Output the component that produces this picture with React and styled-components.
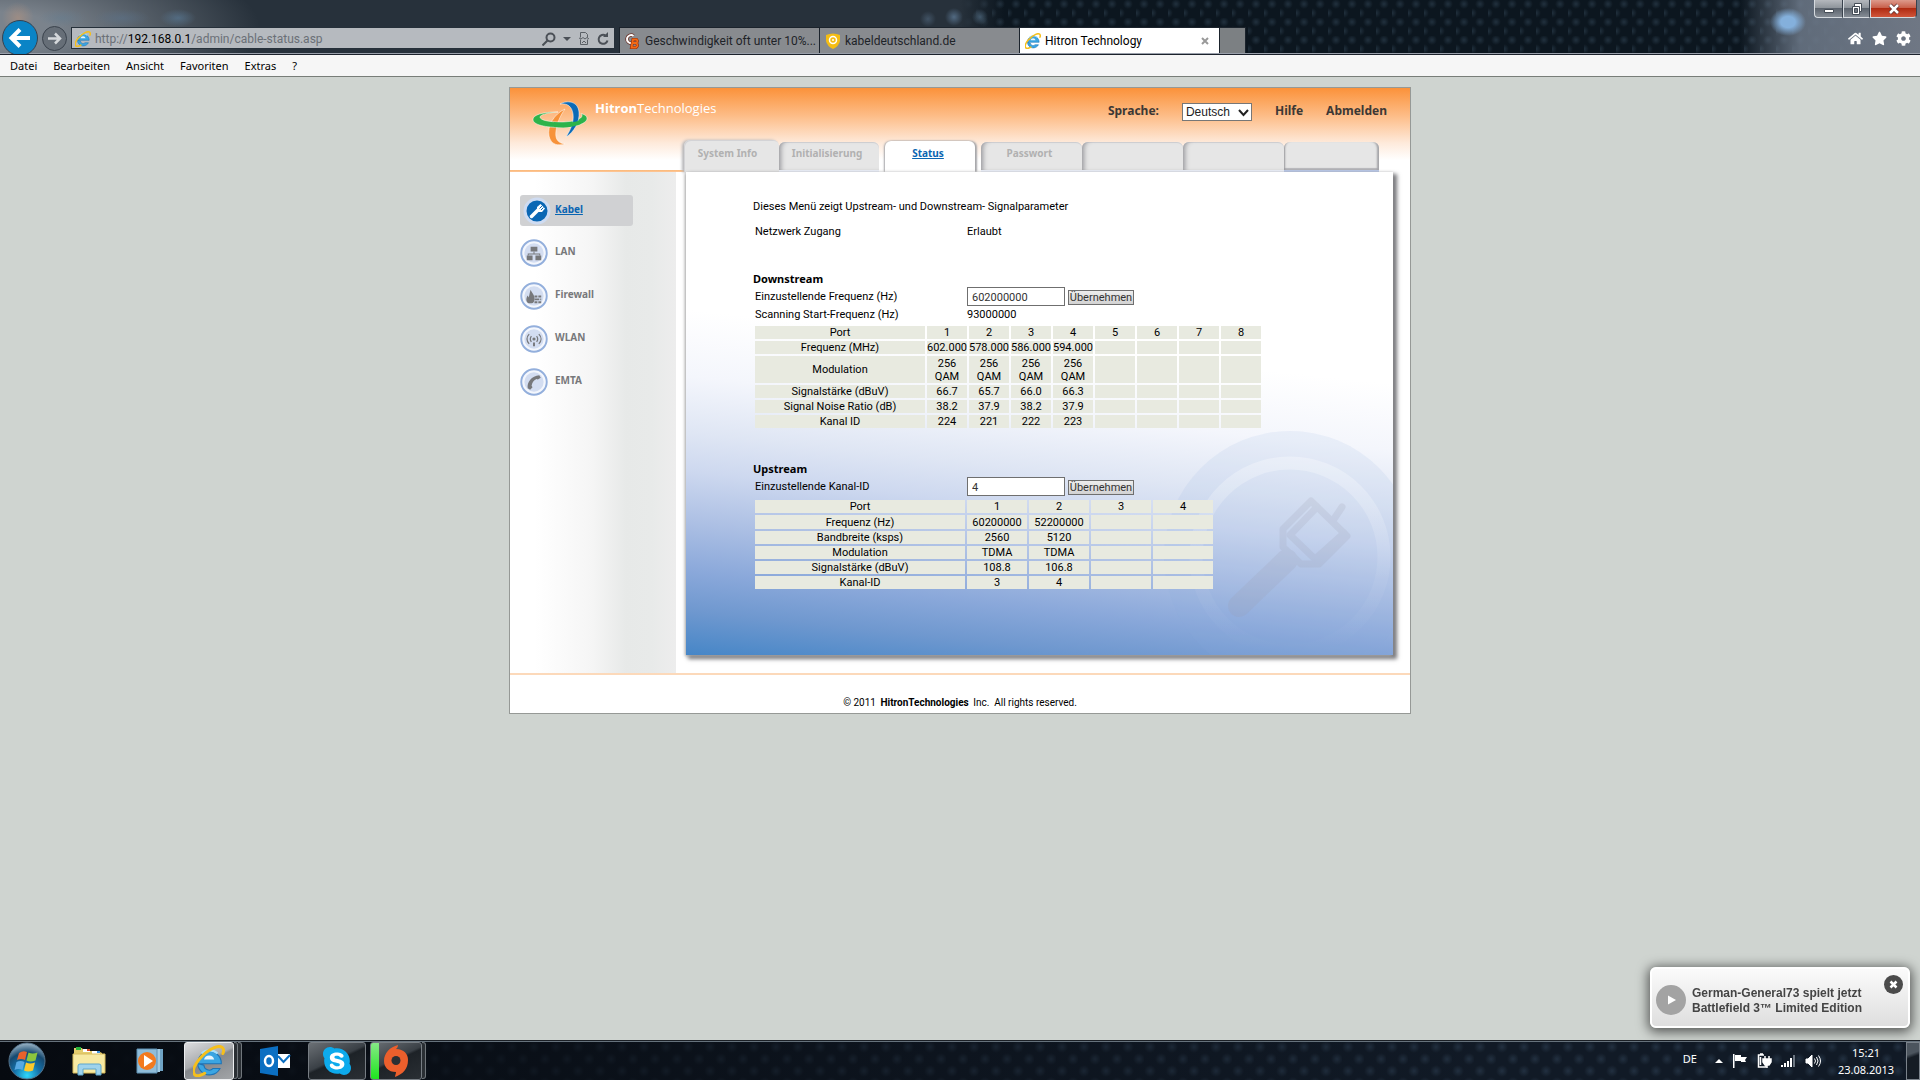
import styled, { createGlobalStyle, css } from 'styled-components';
import { useState } from 'react';
import { FaHome, FaStar, FaCog, FaSkype } from 'react-icons/fa';

const GlobalStyle = createGlobalStyle`
  * {
    box-sizing: border-box;
  }

  body {
    margin: 0;
    background-color: #cfd4d0;
    color: #000;
    font-family: 'Noto Sans', sans-serif;
    font-size: 11px;
  }

  button, input, select {
    font-family: inherit;
    color: inherit;
    margin: 0;
  }

  svg {
    display: block;
    flex: none;
  }
`

const Desktop = styled.div`
  min-height: 100vh;
  display: flex;
  flex-direction: column;
  overflow: hidden;
`

/* browser chrome */

const TitleBar = styled.header`
  overflow: hidden;
  border-bottom: 1px solid #1c222c;
  box-shadow: inset 0 -1px 0 #9aa0ab;
  font-family: Roboto, sans-serif;
  background:
    radial-gradient(ellipse 18px 14px at 1788px 22px, #84b0dc 40%, transparent 100%),
    linear-gradient(90deg, transparent 1740px, rgba(110, 122, 138, 0.85) 1800px, #6f7784 100%),
    radial-gradient(circle 16px at 18px 18px, rgba(190, 150, 125, 0.5), transparent),
    radial-gradient(ellipse 24px 9px at 62px 18px, rgba(100, 125, 145, 0.5), transparent),
    radial-gradient(ellipse 28px 9px at 122px 18px, rgba(90, 115, 140, 0.5), transparent),
    radial-gradient(ellipse 18px 9px at 178px 18px, rgba(90, 125, 155, 0.6), transparent),
    radial-gradient(circle 8px at 928px 19px, rgba(90, 115, 140, 0.5), transparent),
    radial-gradient(circle 9px at 954px 17px, rgba(100, 130, 160, 0.7), transparent),
    radial-gradient(circle 8px at 980px 17px, rgba(90, 120, 145, 0.6), transparent),
    radial-gradient(ellipse 260px 90px at 0 30px, #7b838c 20%, transparent 100%),
    linear-gradient(90deg, #27313b, #27313b 960px, rgba(39, 49, 59, 0) 1004px),
    radial-gradient(circle 5px at 8px 4px, rgba(75, 100, 120, 0.35), transparent) 0 0 / 16px 18px,
    radial-gradient(circle 5px at 0 13px, rgba(75, 100, 120, 0.35), transparent) 0 0 / 16px 18px,
    #0c161f;
`

const WindowControls = styled.div`
  height: 23px;
  padding-right: 3px;
  display: flex;
  justify-content: flex-end;
`

const WindowButton = styled.button`
  width: ${({ $width }) => $width}px;
  height: 18px;
  padding: 0;
  display: flex;
  align-items: center;
  justify-content: center;
  border: 1px solid #d5dadf;
  border-top: none;
  border-right-color: #39424d;
  border-radius: ${({ $radius }) => $radius || '0'};
  background: ${({ $close }) => $close
    ? 'linear-gradient(#dd9a8c 0, #c9614c 45%, #b02b12 50%, #d0553a 100%)'
    : 'linear-gradient(#b4b8bd 0, #8f959c 45%, #5b636d 50%, #858c95 100%)'};
`

const ChromeRow = styled.div`
  height: 31px;
  padding: 0 9px 1px 2px;
  display: flex;
  align-items: center;
`

const RoundButton = styled.button`
  border: none;
  background: none;
  padding: 0;
  margin-right: 4px;
`

const AddressBar = styled.div`
  flex: 0 1 544px;
  height: 22px;
  padding: 1px 4px 0 3px;
  display: flex;
  align-items: center;
  gap: 4px;
  border: 1px solid #dfe2e5;
  outline: 1px solid #26303a;
  outline-offset: -1px;
  background-color: #b6babf;
  color: #6b7077;
`

const Address = styled.div`
  flex: 1;
  font-size: 12px;
  line-height: 20px;
  white-space: nowrap;
  overflow: hidden;

  b {
    font-weight: 400;
    color: #000;
  }
`

const AddressTools = styled.div`
  display: flex;
  align-items: center;
  gap: 7px;
`

const BrowserTabs = styled.nav`
  align-self: flex-end;
  margin-left: 4px;
  display: flex;
`

const BrowserTab = styled.a`
  width: 200px;
  height: 26px;
  padding: 0 10px 0 5px;
  display: flex;
  align-items: center;
  gap: 4px;
  border-left: 1px solid #1b232c;
  border-top: 1px solid #1b232c;
  background-color: ${({ $active }) => $active ? '#fff' : '#888b8f'};
  color: ${({ $active }) => $active ? '#000' : '#1e2328'};
  font-size: 12px;
  line-height: 16px;
  text-decoration: none;
  white-space: nowrap;

  span {
    flex: 1;
  }
`

const NewTab = styled.button`
  width: 27px;
  height: 26px;
  border: 1px solid #1b232c;
  border-bottom: none;
  background-color: #7c8083;
`

const BrowserTools = styled.div`
  margin-left: auto;
  display: flex;
  align-items: center;
  gap: 9px;
  color: #fff;
`

const MenuBar = styled.nav`
  height: 22px;
  padding-left: 10px;
  display: flex;
  align-items: center;
  gap: 16px;
  background-color: #f6f6f6;
  border-bottom: 1px solid #787d78;

  a {
    color: #000;
    font-size: 11px;
    line-height: 20px;
    text-decoration: none;
  }
`

/* router page */

const Viewport = styled.main`
  flex: 1;
  padding-top: 10px;
`

const Page = styled.div`
  max-width: 902px;
  margin: 0 auto;
  border: 1px solid #969996;
  background-color: #fff;
`

const PageHeader = styled.div`
  height: 84px;
  padding-left: 20px;
  display: flex;
  background:
    linear-gradient(#fbb877, #fdc799) left bottom / 174px 2px no-repeat,
    linear-gradient(#fb923a 0, #fdbd88 28px, #feeadb 55px, #fff 72px);
`

const HeaderMain = styled.div`
  flex: 1;
  display: flex;
  flex-direction: column;
  justify-content: space-between;
`

const HeaderTop = styled.div`
  height: 48px;
  padding-right: 23px;
  display: flex;
  align-items: center;
`

const Wordmark = styled.div`
  align-self: flex-start;
  padding: 10px 0 0 1px;
  color: #fff;
  font-family: 'Open Sans', sans-serif;
  font-size: 13px;
  line-height: 20px;
`

const HeaderNav = styled.div`
  margin-left: auto;
  display: flex;
  align-items: center;
  gap: 23px;
  color: #3c3835;
  font-size: 12px;
  font-weight: 700;
  line-height: 18px;

  label, a {
    padding-bottom: 3px;
    color: inherit;
    text-decoration: none;
  }
`

const LanguageSelect = styled.span`
  position: relative;

  select {
    width: 70px;
    height: 18px;
    padding: 0 3px;
    display: block;
    appearance: none;
    border: 1px solid #777;
    border-radius: 0;
    background-color: #fff;
    color: #222;
    font-family: 'Liberation Sans', sans-serif;
    font-size: 12px;
    line-height: 16px;
  }

  svg {
    position: absolute;
    right: 3px;
    top: 6px;
    pointer-events: none;
  }
`

const PageTabs = styled.nav`
  height: 32px;
  margin-left: 90px;
  display: flex;
  align-items: flex-end;
`

const PageTab = styled.a`
  width: ${({ $width }) => $width}px;
  height: 28px;
  margin-bottom: 2px;
  padding-right: 4px;
  border-radius: 6px 6px 0 0;
  background-color: #e6e6e6;
  box-shadow: inset 5px 0 5px -3px #98989c, inset 0 1px 0 #d3d3d6, 0 2px 0 #edf1fb;
  color: #b1b1b1;
  font-size: 10px;
  font-weight: 700;
  line-height: 22px;
  text-align: center;
  text-decoration: none;

  ${({ $first }) => $first && css`
    height: 32px;
    margin-bottom: 0;
    padding-top: 2px;
    padding-right: 8px;
    box-shadow: -2px 0 3px #b5b5b8, inset 1px 1px 0 #d3d3d6;
  `}

  ${({ $active }) => $active && css`
    height: 31px;
    margin: 0 6px 0 6px;
    padding-right: 4px;
    padding-top: 1px;
    background-color: #fff;
    box-shadow: -1px 0 2px #a5a5a8, 2px 0 2px #a5a5a8;
    color: #0a65b2;
    text-decoration: underline;
  `}

  ${({ $last }) => $last && css`
    box-shadow: inset 3px 0 2px -2px #98989c, inset -3px 0 2px -1px #a5a5a8, inset 0 -2px 1px #b4b4b8, 0 2px 0 #b9c8ea;
  `}
`

const PageBody = styled.div`
  min-height: 501px;
  display: flex;
`

const SideNav = styled.nav`
  width: 166px;
  padding: 23px 0 0 10px;
  display: flex;
  flex-direction: column;
  background: linear-gradient(90deg, #fff 15%, #f5f5f5 50%, #e7e9e8 70%, #e8eae9 85%, #ededed);
`

const SideLink = styled.a`
  width: 113px;
  height: 31px;
  margin-bottom: ${({ $active }) => $active ? 11 : 12}px;
  display: flex;
  align-items: center;
  gap: ${({ $active }) => $active ? 4 : 7}px;
  padding-left: ${({ $active }) => $active ? 3 : 0}px;
  border-radius: 3px;
  background-color: ${({ $active }) => $active ? '#d0d1d3' : 'transparent'};
  color: ${({ $active }) => $active ? '#0a65b2' : '#77787b'};
  font-size: 10px;
  font-weight: 700;
  line-height: 14px;
  text-decoration: ${({ $active }) => $active ? 'underline' : 'none'};

  span {
    padding-bottom: 4px;
  }
`

const Panel = styled.section`
  flex: 1;
  position: relative;
  margin: 0 17px 18px 10px;
  padding: 28px 0 64px 67px;
  background: linear-gradient(186deg, #fff 38%, #f4f6fc 50%, #dfe6f4 60%, #cdd8ef 67%, #adc0e4 76%, #8aa8da 85%, #6f98cf 92%, #4686c7 100%);
  box-shadow: -1px 1px 3px #aaa, 3px 3px 4px 1px #77777b;
  clip-path: inset(-3px -17px -18px -10px);
`

const Watermark = styled.svg`
  position: absolute;
  right: 0;
  bottom: 0;
`

const Content = styled.div`
  position: relative;
  font-family: Roboto, sans-serif;
  line-height: 14px;
`

const Intro = styled.p`
  margin: 0 0 11px;
`

const SectionTitle = styled.h2`
  margin: ${({ $top }) => $top}px 0 1px;
  font-family: 'Noto Sans', sans-serif;
  font-size: 11px;
  font-weight: 700;
  line-height: 14px;
`

const Field = styled.div`
  margin: 0 2px 2px;
  display: grid;
  grid-template-columns: 212px auto;
  justify-content: start;
  align-items: center;
`

const FieldForm = styled.form`
  display: flex;
  align-items: center;
  gap: 3px;
`

const TextBox = styled.input`
  width: 98px;
  height: 19px;
  padding: 1px 4px 0;
  border: 1px solid #6f6f6f;
  background-color: #fff;
  color: #333;
  font-size: 11px;
`

const ApplyButton = styled.button`
  width: 66px;
  height: 15px;
  margin-top: 1px;
  padding: 0;
  border: 1px solid #6f6f6f;
  background: linear-gradient(#ededed, #d2d2d2);
  color: #333;
  font-size: 11px;
  line-height: 13px;
  text-align: center;
  white-space: nowrap;
`

const SignalTable = styled.table`
  width: ${({ $width }) => $width}px;
  table-layout: fixed;
  border-collapse: separate;
  border-spacing: 2px;

  th, td {
    width: ${({ $cell }) => $cell}px;
    height: 13px;
    padding: 0;
    background-color: #e8eae0;
    font-weight: 400;
    line-height: 13px;
    text-align: center;
  }

  th:first-child {
    width: ${({ $label }) => $label}px;
  }

  tbody tr:nth-child(${({ $tall }) => $tall.row}) > * {
    height: ${({ $tall }) => $tall.height}px;
  }
`

const PageFooter = styled.footer`
  height: 40px;
  padding-top: 21px;
  border-top: 2px solid #fcd9ba;
  font-family: Roboto, sans-serif;
  font-size: 10px;
  line-height: 14px;
  text-align: center;

  b {
    margin: 0 2px;
    font-weight: 700;
  }
`

/* desktop overlays */

const Toast = styled.aside`
  position: fixed;
  right: 10px;
  bottom: 52px;
  width: 260px;
  height: 61px;
  padding: 6px 5px 0 4px;
  display: flex;
  border: 2px solid #fff;
  border-radius: 6px;
  background: linear-gradient(#fbfbfb, #dedede);
  box-shadow: 0 2px 12px 2px rgba(0, 0, 0, 0.6);
  color: #444;
  font-family: 'Liberation Sans', sans-serif;
  font-size: 12px;
  font-weight: 700;
  line-height: 15px;

  p {
    flex: 1;
    margin: 11px 0 0 6px;
    white-space: nowrap;
  }

  button {
    align-self: flex-start;
    padding: 0;
    border: none;
    background: none;
  }

  > svg {
    margin-top: 10px;
  }
`

const Taskbar = styled.footer`
  height: 40px;
  display: flex;
  align-items: center;
  border-top: 1px solid #1b2026;
  box-shadow: inset 0 1px 0 #66727c;
  background:
    linear-gradient(90deg, #060a10, rgba(6, 10, 16, 0) 1500px),
    radial-gradient(circle 6px at 6px 6px, rgba(75, 100, 125, 0.3), transparent) 0 0 / 22px 24px,
    radial-gradient(circle 6px at 17px 18px, rgba(75, 100, 125, 0.3), transparent) 0 0 / 22px 24px,
    #111a26;
`

const TaskButton = styled.button`
  width: ${({ $width }) => $width}px;
  height: 38px;
  margin-left: ${({ $gap }) => $gap || 0}px;
  padding: 0;
  display: flex;
  align-items: center;
  justify-content: center;
  border: none;
  background: none;

  ${({ $open }) => $open && css`
    border: 1px solid #777d83;
    border-radius: 3px;
    background: linear-gradient(155deg, #6b7075 0, #3a4046 45%, #1d2227 50%, #2a2f34 100%);
  `}

  ${({ $focused }) => $focused && css`
    border-color: #eceef0;
    background: linear-gradient(155deg, #dcdddf 0, #a9abae 45%, #85888c 50%, #a2a5a8 100%);
  `}

  ${({ $progress }) => $progress && css`
    background:
      linear-gradient(#86e886, #1ee61e) left / 8px 100% no-repeat,
      linear-gradient(155deg, #6b7075 0, #3a4046 45%, #1d2227 50%, #2a2f34 100%);
  `}
`

const Stack = styled.i`
  width: 4px;
  height: 37px;
  border: 1px solid #70767b;
  border-left: none;
  border-radius: 0 3px 3px 0;
  background-color: #2a2f34;
`

const Tray = styled.div`
  margin-left: auto;
  padding-right: 5px;
  display: flex;
  align-items: center;
  gap: 9px;
`

const Language = styled.span`
  margin-right: 9px;
  padding-bottom: 5px;
  color: #fff;
  font-size: 11px;
`

const Clock = styled.time`
  width: 80px;
  color: #fff;
  font-size: 11px;
  line-height: 17px;
  text-align: center;
`

const ShowDesktop = styled.button`
  width: 14px;
  height: 38px;
  border: 1px solid #7b838b;
  background: linear-gradient(160deg, #4c555e 30%, #151c24 40%);
`

const IeLogo = ({ size }) => (
  <svg width={size} height={size} viewBox="1 1 30 30">
    <path d="M6 18.500h21.500a11 11 0 1 0-1.200 4.500h-6.500a5 5 0 0 1-8.600-3z" fill="#3aa5e2" stroke="#1b73b8" strokeWidth="1" />
    <path d="M11.300 14.500a5 5 0 0 1 9.600 0z" fill="#e9f5fc" />
    <path d="M9 9a11 11 0 0 1 15 0" fill="none" stroke="#a8e0fa" strokeWidth="2" />
    <path d="M29 9C31 4 28 .5 21 3.500 10 8-1 22 2 28c1.500 3 6 2 10-.5" fill="none" stroke="#f5bf1c" strokeWidth="2.800" strokeLinecap="round" />
  </svg>
)

const HitronLogo = () => (
  <svg width="64" height="60" viewBox="0 0 64 60">
    <g stroke="#fff" strokeOpacity="0.5" strokeWidth="1">
      <path d="M35 21C24 26 17 38 19 48c2 9 9 10 16 8-8-1-10-6-9-13 1-8 4-15 9-22z" fill="#f7923a" />
      <path d="M28 24C12 24 3 27 3 31.500 3 37 16 39.500 31 39.500c14 0 26-4 26-9 0-3-3-4-6-5 4 4-4 8.500-20 8.500-13 0-21-2-21-5 0-2 6-4 18-5z" fill="#2db34a" />
      <path d="M30 16C37 12 48 13 49 24c1 10-5 20-13 25 5-8 8-15 7-23-1-7-5-11-13-10z" fill="#0a6ab6" />
      <path d="M24 38.800c10 1.500 20 .5 27-3l-1-3.500c-7 2.500-17 3.500-26 2z" fill="#2db34a" stroke="none" />
    </g>
  </svg>
)

const sideGlyphs = {
  lan: (
    <g fill="#77787b">
      <path d="M11 8h7v5h-7zM7 17h6v5H7zM16 17h6v5h-6z" />
      <path d="M14 13h1v2h6v2h-1v-1H9v1H8v-2h6z" />
    </g>
  ),
  firewall: (
    <g fill="#77787b">
      <path d="M11 8c1 3 4 5 4 9 0 3-1 5-3 5H9c-3-1-3-5-1-8l1 2c1-3 1-5 2-8z" />
      <path d="M15 14h3v2h-3zM19 14h3v2h-3zM15 17h5v2h-5zM21 17h1v2h-1zM15 20h3v2h-3zM19 20h3v2h-3z" />
    </g>
  ),
  wlan: (
    <g fill="none" stroke="#77787b" strokeWidth="1.300">
      <path d="M9.500 9.500c-3 3-3 7 0 10M19.500 9.500c3 3 3 7 0 10M11.800 11.500c-1.500 2-1.500 4 0 6M17.200 11.500c1.500 2 1.500 4 0 6" />
      <circle cx="14.500" cy="14.500" r="1" fill="#77787b" />
      <path d="M14.500 18v4" strokeWidth="2" />
    </g>
  ),
  emta: <path d="M20 7.500 21.500 10l-3 2-1.500-.5c-3 1.500-4.500 4-5 7l1 1.500-2.500 2.500L8 21c-1-6 4-13 12-13.500z" fill="#77787b" />,
}

const SideIcon = ({ name }) => name === 'kabel' ? (
  <svg width="28" height="28" viewBox="0 0 28 28">
    <circle cx="14" cy="14" r="12" fill="#0b67b4" stroke="#cfdcf2" strokeWidth="3" />
    <path d="m8.500 19.500 7-7" stroke="#fff" strokeWidth="3.500" strokeLinecap="round" />
    <path d="m14 10 3.500-3 4.500 4.500-3 3.500h-3.500L14 13z" fill="#fff" />
    <path d="m16.500 11.500 3-3M18 13l2.500-2.500" stroke="#0b67b4" />
  </svg>
) : (
  <svg width="28" height="28" viewBox="0 0 29 29">
    <circle cx="14.500" cy="14.500" r="13.200" fill="#f4f7fd" stroke="#93afdc" strokeWidth="2" />
    <circle cx="14.500" cy="14.500" r="10" fill="#d3ddf1" />
    {sideGlyphs[name]}
  </svg>
)

const pageTabs = [
  { label: 'System Info', width: 95, first: true },
  { label: 'Initialisierung', width: 100 },
  { label: 'Status', width: 90, active: true },
  { label: 'Passwort', width: 101 },
  { label: '', width: 101 },
  { label: '', width: 101 },
  { label: '', width: 95, last: true },
];

const sideLinks = [
  { icon: 'kabel', label: 'Kabel', active: true },
  { icon: 'lan', label: 'LAN' },
  { icon: 'firewall', label: 'Firewall' },
  { icon: 'wlan', label: 'WLAN' },
  { icon: 'emta', label: 'EMTA' },
];

const downstream = {
  ports: 8,
  rows: [
    ['Frequenz (MHz)', '602.000', '578.000', '586.000', '594.000'],
    ['Modulation', '256 QAM', '256 QAM', '256 QAM', '256 QAM'],
    ['Signalstärke (dBuV)', '66.7', '65.7', '66.0', '66.3'],
    ['Signal Noise Ratio (dB)', '38.2', '37.9', '38.2', '37.9'],
    ['Kanal ID', '224', '221', '222', '223'],
  ],
};

const upstream = {
  ports: 4,
  rows: [
    ['Frequenz (Hz)', '60200000', '52200000'],
    ['Bandbreite (ksps)', '2560', '5120'],
    ['Modulation', 'TDMA', 'TDMA'],
    ['Signalstärke (dBuV)', '108.8', '106.8'],
    ['Kanal-ID', '3', '4'],
  ],
};

const PortTable = ({ data, ...sizes }) => {
  const ports = Array.from({ length: data.ports }, (_, i) => i + 1);

  return (
    <SignalTable {...sizes}>
      <thead>
        <tr>
          <th scope="col">Port</th>
          {ports.map(port => <th key={port} scope="col">{port}</th>)}
        </tr>
      </thead>
      <tbody>
        {data.rows.map(([label, ...values]) => (
          <tr key={label}>
            <th scope="row">{label}</th>
            {ports.map(port => <td key={port}>{values[port - 1]}</td>)}
          </tr>
        ))}
      </tbody>
    </SignalTable>
  );
};

const ApplyField = ({ id, label, initial }) => {
  const [value, setValue] = useState(initial);

  return (
    <Field>
      <label htmlFor={id}>{label}</label>
      <FieldForm onSubmit={e => e.preventDefault()}>
        <TextBox id={id} type="text" value={value} onChange={e => setValue(e.target.value)} />
        <ApplyButton type="submit">Übernehmen</ApplyButton>
      </FieldForm>
    </Field>
  );
};

const BrowserChrome = () => (
  <>
    <TitleBar>
      <WindowControls>
        <WindowButton $width={29} $radius="0 0 0 4px" aria-label="Minimieren">
          <svg width="12" height="12"><path d="M1.500 6.500h9v3h-9z" fill="#fff" stroke="#454d57" /></svg>
        </WindowButton>
        <WindowButton $width={27} aria-label="Verkleinern">
          <svg width="14" height="14">
            <path d="M4.500 1.500h7v8h-7z" fill="#fff" stroke="#454d57" />
            <path d="M2.500 4.500h7v8h-7z" fill="#fff" stroke="#454d57" />
            <path d="M4.500 6.500h3v4h-3z" fill="#6d757e" stroke="#454d57" />
          </svg>
        </WindowButton>
        <WindowButton $width={47} $radius="0 0 4px 0" $close aria-label="Schließen">
          <svg width="12" height="12">
            <path d="m2 2 8 8m0-8-8 8" stroke="#5a3030" strokeWidth="4" />
            <path d="m2 2 8 8m0-8-8 8" stroke="#fff" strokeWidth="2.500" />
          </svg>
        </WindowButton>
      </WindowControls>
      <ChromeRow>
        <RoundButton aria-label="Zurück">
          <svg width="36" height="36" viewBox="0 0 36 36">
            <circle cx="18" cy="18" r="17.500" fill="#0a84c6" stroke="#39424e" />
            <path d="M28 18H10m8-8.500L9.500 18l8.500 8.500" fill="none" stroke="#fff" strokeWidth="4" />
          </svg>
        </RoundButton>
        <RoundButton aria-label="Vorwärts">
          <svg width="25" height="25" viewBox="0 0 25 25">
            <circle cx="12.500" cy="12.500" r="12" fill="#666e77" stroke="#3b434d" />
            <path d="M6 12.500h12m-5-5 5 5-5 5" fill="none" stroke="#d5d8db" strokeWidth="2.500" />
          </svg>
        </RoundButton>
        <AddressBar>
          <IeLogo size={16} />
          <Address>http://<b>192.168.0.1</b>/admin/cable-status.asp</Address>
          <AddressTools>
            <svg width="14" height="14" fill="none" stroke="#4b5057" strokeWidth="2">
              <circle cx="8.500" cy="5.500" r="4" />
              <path d="m5.500 8.500-5 5" />
            </svg>
            <svg width="8" height="6"><path d="M0 1h8L4 5z" fill="#4b5057" /></svg>
            <svg width="12" height="13" fill="none" stroke="#5b6066">
              <path d="M2.500 5.500v-5h5l2 2v3M2.500 7.500v5h7v-5M1 6l2 1 2-1.500L7 7l2-1.500L11 7M4 11l2-2 2 2" />
            </svg>
            <svg width="13" height="14" fill="none" stroke="#4b5057" strokeWidth="2">
              <path d="M10.500 8.500a4.500 4.500 0 1 1-2-5" />
              <path d="M11 0v5H6z" fill="#4b5057" stroke="none" />
            </svg>
          </AddressTools>
        </AddressBar>
        <BrowserTabs>
          <BrowserTab href="#forum">
            <svg width="16" height="16" viewBox="0 0 16 16" fill="none">
              <path d="M8.500 3A4 4 0 1 0 7 10" stroke="#6b3328" strokeWidth="3.500" />
              <path d="M8.500 3A4 4 0 1 0 7 10" stroke="#fff" strokeWidth="2" />
              <path d="M8 6.500h3.500q2 2-.5 3.500 3 2 0 4.500H6.500zM7.500 10H11" stroke="#8b2a0c" strokeWidth="3" />
              <path d="M8 6.500h3.500q2 2-.5 3.500 3 2 0 4.500H6.500zM7.500 10H11" stroke="#f36a15" strokeWidth="1.800" />
            </svg>
            <span>Geschwindigkeit oft unter 10%...</span>
          </BrowserTab>
          <BrowserTab href="#kabel">
            <svg width="16" height="16" viewBox="0 0 16 16">
              <path d="M1 2q7-3 14 0v6q-1 5-7 8-6-3-7-8z" fill="#f5bd13" />
              <circle cx="8" cy="7" r="3.500" fill="none" stroke="#fff" strokeWidth="1.500" />
              <circle cx="8" cy="7" r="1" fill="#fff" />
            </svg>
            <span>kabeldeutschland.de</span>
          </BrowserTab>
          <BrowserTab href="#hitron" $active>
            <IeLogo size={16} />
            <span>Hitron Technology</span>
            <svg width="8" height="8"><path d="m1 1 6 6m0-6-6 6" stroke="#999" strokeWidth="2" /></svg>
          </BrowserTab>
          <NewTab aria-label="Neue Registerkarte" />
        </BrowserTabs>
        <BrowserTools>
          <FaHome size={15} />
          <FaStar size={15} />
          <FaCog size={15} />
        </BrowserTools>
      </ChromeRow>
    </TitleBar>
    <MenuBar>
      {['Datei', 'Bearbeiten', 'Ansicht', 'Favoriten', 'Extras', '?'].map(item => (
        <a key={item} href="#menu">{item}</a>
      ))}
    </MenuBar>
  </>
)

const PanelWatermark = () => (
  <Watermark width="246" height="240" viewBox="-4 -4 246 240" aria-hidden="true">
    <defs>
      <linearGradient id="ring" x1="0" y1="0" x2="0" y2="1">
        <stop offset="0" stopColor="#fff" stopOpacity="0.300" />
        <stop offset="0.600" stopColor="#fff" stopOpacity="0.060" />
        <stop offset="1" stopColor="#fff" stopOpacity="0" />
      </linearGradient>
    </defs>
    <circle cx="139" cy="138" r="126" fill="#8fabdd" fillOpacity="0.120" />
    <circle cx="139" cy="138" r="94" fill="none" stroke="url(#ring)" strokeWidth="13" />
    <g opacity="0.180" fill="none" stroke="#9a9cae" strokeWidth="7" strokeLinejoin="round" strokeLinecap="round">
      <path d="m160 82 36 35-28 28h-18l-18-17v-18z" />
      <path d="m166 88-27 28 25 24 29-26M183 100l8-12" />
      <path d="m88 187 48-46" strokeWidth="22" />
    </g>
  </Watermark>
)

const RouterPage = () => (
  <Page>
    <PageHeader>
      <HitronLogo />
      <HeaderMain>
        <HeaderTop>
          <Wordmark><b>Hitron</b>Technologies</Wordmark>
          <HeaderNav>
            <label htmlFor="language">Sprache:</label>
            <LanguageSelect>
              <select id="language" defaultValue="de">
                <option value="de">Deutsch</option>
                <option value="en">English</option>
              </select>
              <svg width="11" height="8"><path d="m1 1 4.500 5L10 1" fill="none" stroke="#222" strokeWidth="2" /></svg>
            </LanguageSelect>
            <a href="#help">Hilfe</a>
            <a href="#logout">Abmelden</a>
          </HeaderNav>
        </HeaderTop>
        <PageTabs>
          {pageTabs.map(({ label, width, first, active, last }, i) => (
            <PageTab key={i} href="#tab" $width={width} $first={first} $active={active} $last={last}>{label}</PageTab>
          ))}
        </PageTabs>
      </HeaderMain>
    </PageHeader>
    <PageBody>
      <SideNav>
        {sideLinks.map(({ icon, label, active }) => (
          <SideLink key={icon} href="#side" $active={active}>
            <SideIcon name={icon} />
            <span>{label}</span>
          </SideLink>
        ))}
      </SideNav>
      <Panel>
        <PanelWatermark />
        <Content>
          <Intro>Dieses Menü zeigt Upstream- und Downstream- Signalparameter</Intro>
          <Field>
            <span>Netzwerk Zugang</span>
            <span>Erlaubt</span>
          </Field>
          <SectionTitle $top={33}>Downstream</SectionTitle>
          <ApplyField id="frequency" label="Einzustellende Frequenz (Hz)" initial="602000000" />
          <Field>
            <span>Scanning Start-Frequenz (Hz)</span>
            <span>93000000</span>
          </Field>
          <PortTable data={downstream} $width={510} $label={170} $cell={40} $tall={{ row: 2, height: 27 }} />
          <SectionTitle $top={32}>Upstream</SectionTitle>
          <ApplyField id="channel" label="Einzustellende Kanal-ID" initial="4" />
          <PortTable data={upstream} $width={460} $label={210} $cell={60} $tall={{ row: 1, height: 14 }} />
        </Content>
      </Panel>
    </PageBody>
    <PageFooter>© 2011 <b>HitronTechnologies</b> Inc. &nbsp;All rights reserved.</PageFooter>
  </Page>
)

const DesktopTaskbar = () => (
  <Taskbar>
    <TaskButton $width={54} aria-label="Start">
      <svg width="38" height="38" viewBox="0 0 38 38">
        <defs>
          <radialGradient id="orb" cx="50%" cy="90%" r="90%">
            <stop offset="0" stopColor="#2fd8fb" />
            <stop offset="0.400" stopColor="#1570a8" />
            <stop offset="0.700" stopColor="#16496f" />
            <stop offset="1" stopColor="#9fb7c8" />
          </radialGradient>
        </defs>
        <circle cx="19" cy="19" r="18" fill="url(#orb)" stroke="#54728a" />
        <path d="M11 11q4-3 8-1l-2 8q-4-2-8 0z" fill="#e8622b" />
        <path d="M20.500 10.500q4 2 9 0l-2 8q-5 2-9 0z" fill="#8cc63e" />
        <path d="M8.500 20q4-2 8 0l-2 8q-4-2-8 0z" fill="#57a9e3" />
        <path d="M18 20.500q4 2 9 0l-2 8q-5 2-9 0z" fill="#fdc92b" />
      </svg>
    </TaskButton>
    <TaskButton $width={62} $gap={4} aria-label="Windows-Explorer">
      <svg width="34" height="32" viewBox="0 0 34 32">
        <path d="M2 3h8l2 3h14l4 2v20H2z" fill="#e5cc6d" />
        <path d="M4 2h5v3H4z" fill="#28b53a" />
        <path d="M11 4h7v3h-7z" fill="#fff" />
        <path d="M15 4h3v2h-3z" fill="#d84b2b" />
        <path d="M20 6h8v3h-8z" fill="#fff" />
        <path d="M25 6h3v2h-3z" fill="#3c8fd8" />
        <path d="M1 9h32v19H1z" fill="#f7e9a2" stroke="#d8bc5c" />
        <path d="M6 30V21q0-2 2-2h19q2 0 2 2v9h-5v-6H11v6z" fill="#9fd3ec" stroke="#5ea6cc" />
      </svg>
    </TaskButton>
    <TaskButton $width={60} aria-label="Media Player">
      <svg width="28" height="28" viewBox="0 0 28 28">
        <path d="M18 2h9v22h-9z" fill="#6fa3c4" />
        <path d="M18 2h6v23h-6z" fill="#a3cbe2" />
        <path d="M1 2h20v24H1z" fill="#8fbcd8" stroke="#5f91b3" />
        <circle cx="11" cy="14" r="9" fill="#f27a1f" />
        <path d="M8 8v12l9-6z" fill="#fff" />
      </svg>
    </TaskButton>
    <TaskButton $width={50} $gap={4} $open $focused aria-label="Internet Explorer">
      <IeLogo size={32} />
    </TaskButton>
    <Stack />
    <Stack />
    <TaskButton $width={66} aria-label="Outlook">
      <svg width="32" height="32" viewBox="0 0 32 32">
        <path d="M1 4 19 1v30L1 28z" fill="#0b6fc2" />
        <path d="M19 9h12v14H19z" fill="#fff" />
        <path d="m19 11 5.500 6L31 10" fill="none" stroke="#0b6fc2" strokeWidth="2" />
        <ellipse cx="10" cy="16" rx="4" ry="5" fill="none" stroke="#fff" strokeWidth="2.500" />
      </svg>
    </TaskButton>
    <TaskButton $width={58} $open aria-label="Skype">
      <svg width="32" height="32" viewBox="0 0 32 32">
        <circle cx="16" cy="16" r="11" fill="#fff" />
        <FaSkype size={32} color="#0daaec" />
      </svg>
    </TaskButton>
    <TaskButton $width={52} $gap={4} $open $progress aria-label="Origin">
      <svg width="28" height="34" viewBox="0 0 28 34">
        <path d="M16 1c0 2-1 3-2 4 8 0 12 5 12 11 0 9-5 14-13 17 0-2 1-3 1-5C6 28 2 23 2 17 2 9 8 3 16 1z" fill="#ec5f2c" />
        <circle cx="14" cy="16.500" r="4.500" fill="#2b2f34" />
      </svg>
    </TaskButton>
    <Stack />
    <Tray>
      <Language>DE</Language>
      <svg width="9" height="6"><path d="M0 5h8L4 1z" fill="#fff" /></svg>
      <svg width="15" height="16" fill="#fff"><path d="M0 1h1.500v14H0zM2 2h6v2h6l-2 3 1 2H8V8H2z" /></svg>
      <svg width="15" height="16" fill="none" stroke="#fff" strokeWidth="1.500">
        <path d="M7 2H1.500v12H9v-2M3 1h3M3.500 4v8" />
        <path d="M6 6h8v3l-2 3H8L6 9zM8 6V3M12 6V3M10 12v3" fill="#fff" />
      </svg>
      <svg width="15" height="14" fill="#fff">
        <path d="M0 11h2v2H0zM3 9h2v4H3zM6 7h2v6H6zM9 4h2v9H9z" />
        <path d="M12 1h2v12h-2z" fill="#6c7681" />
      </svg>
      <svg width="16" height="16" fill="none" stroke="#fff">
        <path d="M1 6h2l4-4v12l-4-4H1z" fill="#fff" />
        <path d="M9.500 5.500q2 2.500 0 5M11.500 4q3 4 0 8M13.500 2.500q4 5.500 0 11" />
      </svg>
    </Tray>
    <Clock>15:21<br />23.08.2013</Clock>
    <ShowDesktop aria-label="Desktop anzeigen" />
  </Taskbar>
)

const GameToast = () => (
  <Toast>
    <svg width="30" height="30">
      <circle cx="15" cy="15" r="15" fill="#a3a3a3" />
      <path d="M12 10.500v9l8-4.500z" fill="#fff" />
    </svg>
    <p>German-General73 spielt jetzt<br />Battlefield 3™ Limited Edition</p>
    <button aria-label="Schließen">
      <svg width="19" height="19">
        <circle cx="9.500" cy="9.500" r="9.500" fill="#4b4b4b" />
        <path d="m6.500 6.500 6 6m0-6-6 6" stroke="#fff" strokeWidth="2.500" />
      </svg>
    </button>
  </Toast>
)

export default function App() {
  return (
    <Desktop>
      <GlobalStyle />
      <BrowserChrome />
      <Viewport>
        <RouterPage />
      </Viewport>
      <DesktopTaskbar />
      <GameToast />
    </Desktop>
  );
}
